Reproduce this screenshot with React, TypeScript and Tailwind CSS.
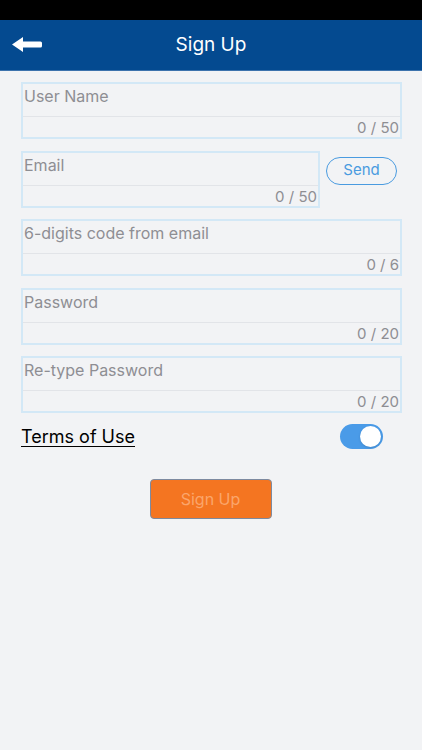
import React from "react";

const FONT = { fontFamily: "Inter, 'Liberation Sans', sans-serif" };

function Field({ label, max, narrow }: { label: string; max: number; narrow?: boolean }) {
  return (
    <div
      className={`h-[57px] border-2 border-[#d3e8f6] flex flex-col ${narrow ? "w-[299px]" : "w-[381px]"}`}
    >
      <div className="h-[33px] border-b border-[#e2e4e8] px-[1px] pt-[1px] text-[16px] leading-[22px] text-[#8e8e93]">
        {label}
      </div>
      <div className="flex-1 flex items-end justify-end pr-[1px] text-[15px] leading-[19px] text-[#8e8e93]">
        0 / {max}
      </div>
    </div>
  );
}

export default function App() {
  return (
    <div className="w-[422px] h-[750px] bg-[#f2f3f5] flex flex-col" style={FONT}>
      <div className="h-[20px] bg-black" />
      <div className="h-[51px] bg-[#044a90] border-b border-[#3d73ad] flex items-center relative">
        <svg className="absolute left-[12px] top-[17px]" width="30" height="15" viewBox="0 0 30 15">
          <path d="M0 7.5 L11 0 L11 4.5 L28.5 4.5 Q30 4.5 30 6 L30 9 Q30 10.5 28.5 10.5 L11 10.5 L11 15 Z" fill="#ffffff" />
        </svg>
        <div className="flex-1 text-center text-white text-[19px] leading-[24px] -mt-[1px]">Sign Up</div>
      </div>

      <div className="flex flex-col gap-[11.5px] pl-[21px] pt-[11px]">
        <Field label="User Name" max={50} />
        <div className="flex items-start">
          <Field label="Email" max={50} narrow />
          <div className="ml-[6px] mt-[6px] w-[71px] h-[28px] rounded-full border border-[#4a9be0] text-[#4a9be0] text-[15px] flex items-center justify-center">
            Send
          </div>
        </div>
        <Field label="6-digits code from email" max={6} />
        <Field label="Password" max={20} />
        <Field label="Re-type Password" max={20} />
      </div>

      <div className="flex items-center justify-between pl-[21px] pr-[39px] mt-[10px] h-[26px]">
        <span className="text-[18px] text-black underline underline-offset-[3px]">Terms of Use</span>
        <div className="w-[43px] h-[25px] rounded-full bg-[#4a9be8] flex items-center justify-end pr-[2px]">
          <div className="w-[21px] h-[21px] rounded-full bg-white shadow" />
        </div>
      </div>

      <div className="flex justify-center mt-[30px]">
        <div className="w-[122px] h-[40px] rounded-[4px] bg-[#f47521] border border-[#7d8aa0] flex items-center justify-center text-[#fba56b] text-[16px] ml-[-1px]">
          Sign Up
        </div>
      </div>
    </div>
  );
}
